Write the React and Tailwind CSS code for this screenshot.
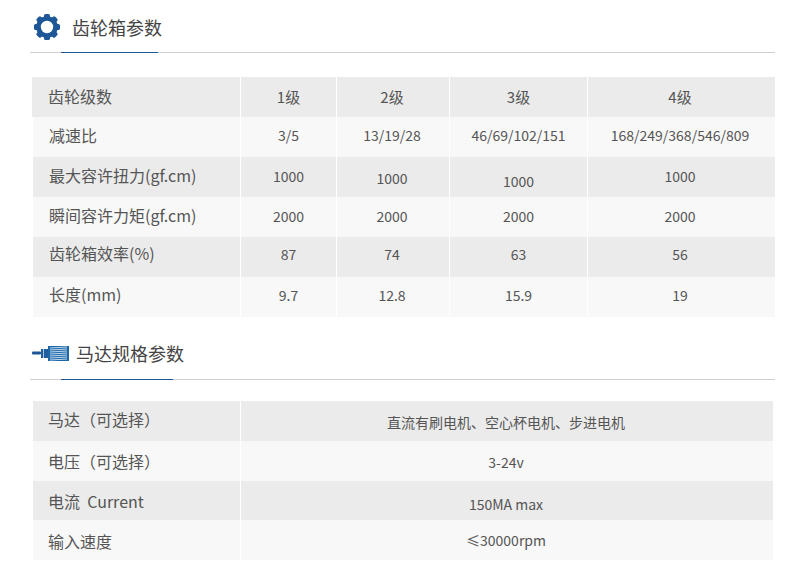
const gearTeeth = [0, 45, 90, 135, 180, 225, 270, 315];

const GearIcon = () => (
  <svg width="28" height="28" viewBox="0 0 28 28" className="shrink-0">
    <circle cx="14" cy="14" r="8.5" fill="none" stroke="#1d5797" strokeWidth="4.6" />
    {gearTeeth.map(a => (
      <rect key={a} x="11" y="1" width="6" height="5" rx="1.6" fill="#1d5797" transform={`rotate(${a} 14 14)`} />
    ))}
  </svg>
);

const MotorIcon = () => (
  <svg width="38" height="17" viewBox="0 0 38 17" className="shrink-0">
    <rect x="0" y="6.5" width="9" height="3" rx="1" fill="#1d5797" />
    <rect x="9" y="4" width="7" height="9" fill="#1d5f9f" />
    <rect x="11" y="4" width="1" height="9" fill="#a9c6e0" />
    <rect x="16" y="1" width="21" height="15" fill="#1d66a8" />
    {[3, 5, 7, 9, 11, 13, 15].map(y => (
      <path key={y} d={`M18 ${y} L35 ${y - 1}`} stroke="#d4e5f4" strokeWidth="0.9" />
    ))}
  </svg>
);

const SectionTitle = ({ icon, title, accent, textClass }) => (
  <div className="relative flex h-[53px] items-center border-b border-[#cfcfcf] pl-[2px]">
    {icon}
    <h2 className={`text-[18px] font-normal text-[#444] ${textClass}`}>{title}</h2>
    <div className={`absolute bottom-[-1px] left-[31px] h-[1px] bg-[#1d5797] ${accent}`}></div>
  </div>
);

// text, extra class for the nudges the source image has
const gearRows = [
  [['齿轮级数', 'pb-[2px]'], ['1级'], ['2级', 'pr-[2px]'], ['3级'], ['4级', 'pr-[3px]']],
  [['减速比', 'pb-[4px]'], ['3/5', 'pb-[4px]'], ['13/19/28', 'pb-[4px] pr-[2px]'], ['46/69/102/151', 'pb-[3px]'], ['168/249/368/546/809', 'pb-[3px] pr-[3px]']],
  [['最大容许扭力(gf.cm)', 'pb-[4px]'], ['1000', 'pb-[1px]'], ['1000', 'pt-[2px] pr-[2px]'], ['1000', 'pt-[9px]'], ['1000', 'pb-[1px] pr-[3px]']],
  [['瞬间容许力矩(gf.cm)', 'pb-[4px]'], ['2000', 'pb-[2px]'], ['2000', 'pb-[2px] pr-[2px]'], ['2000', 'pb-[2px]'], ['2000', 'pb-[2px] pr-[3px]']],
  [['齿轮箱效率(%)', 'pb-[8px]'], ['87', 'pb-[5px]'], ['74', 'pb-[5px] pr-[2px]'], ['63', 'pb-[5px]'], ['56', 'pb-[5px] pr-[3px]']],
  [['长度(mm)', 'pb-[6px]'], ['9.7', 'pb-[3px]'], ['12.8', 'pb-[3px] pr-[2px]'], ['15.9', 'pb-[3px]'], ['19', 'pb-[3px] pr-[3px]']],
];

const motorRows = [
  { label: '马达（可选择）', value: '直流有刷电机、空心杯电机、步进电机', h: 'h-[40px]', labelClass: 'pb-[4px]', valueClass: 'pt-[2px]' },
  { label: '电压（可选择）', value: '3-24v', h: 'h-[40px]', labelClass: '', valueClass: 'pt-[2px]' },
  { label: '电流\u00a0\u00a0Current', value: '150MA max', h: 'h-[39px]', labelClass: '', valueClass: 'pt-[8px]' },
  { label: '输入速度', value: '≤30000rpm', h: 'h-[40px]', labelClass: 'pt-[1px]', valueClass: '' },
];

const App = () => {
  return (
    <div
      className="h-[575px] w-[790px] overflow-hidden bg-white pl-[30px] pr-[15px] text-[#555]"
      style={{ fontFamily: '"Noto Sans CJK SC", "Noto Sans", sans-serif' }}
    >
      <SectionTitle
        icon={<div className="ml-[1px] mr-[11px] mt-[1px]"><GearIcon /></div>}
        title="齿轮箱参数"
        accent="w-[97px]"
        textClass="pt-[2px]"
      />

      <div className="ml-[2px] mt-[24px] grid grid-cols-[208px_96px_113px_138px_188px]">
        {gearRows.map((row, i) =>
          row.map(([text, nudge], j) => (
            <div
              key={`${i}-${j}`}
              className={`flex h-[40px] items-center border-l border-white first:border-l-0 ${
                i % 2 === 0 ? 'bg-[#ebebeb]' : 'bg-[#f8f8f8]'
              } ${j === 0 ? 'pl-[16px] text-[16px]' : i === 0 ? 'justify-center text-[15px]' : 'justify-center text-[14px]'} ${nudge || ''}`}
            >
              {text}
            </div>
          ))
        )}
      </div>

      <div className="mt-[10px]">
        <SectionTitle
          icon={<div className="mr-[6px] mt-[1px]"><MotorIcon /></div>}
          title="马达规格参数"
          accent="w-[112px]"
          textClass=""
        />
      </div>

      <div className="ml-[3px] mr-[2px] mt-[21px]">
        {motorRows.map((row, i) => (
          <div
            key={row.label}
            className={`grid ${row.h} grid-cols-[207px_1fr] ${i % 2 === 0 ? 'bg-[#ebebeb]' : 'bg-[#f8f8f8]'}`}
          >
            <div className={`flex items-center pl-[15px] text-[16px] ${row.labelClass}`}>{row.label}</div>
            <div className={`flex items-center justify-center border-l border-white pr-[2px] text-[14px] ${row.valueClass}`}>
              {row.value}
            </div>
          </div>
        ))}
      </div>
    </div>
  );
};

export default App;
